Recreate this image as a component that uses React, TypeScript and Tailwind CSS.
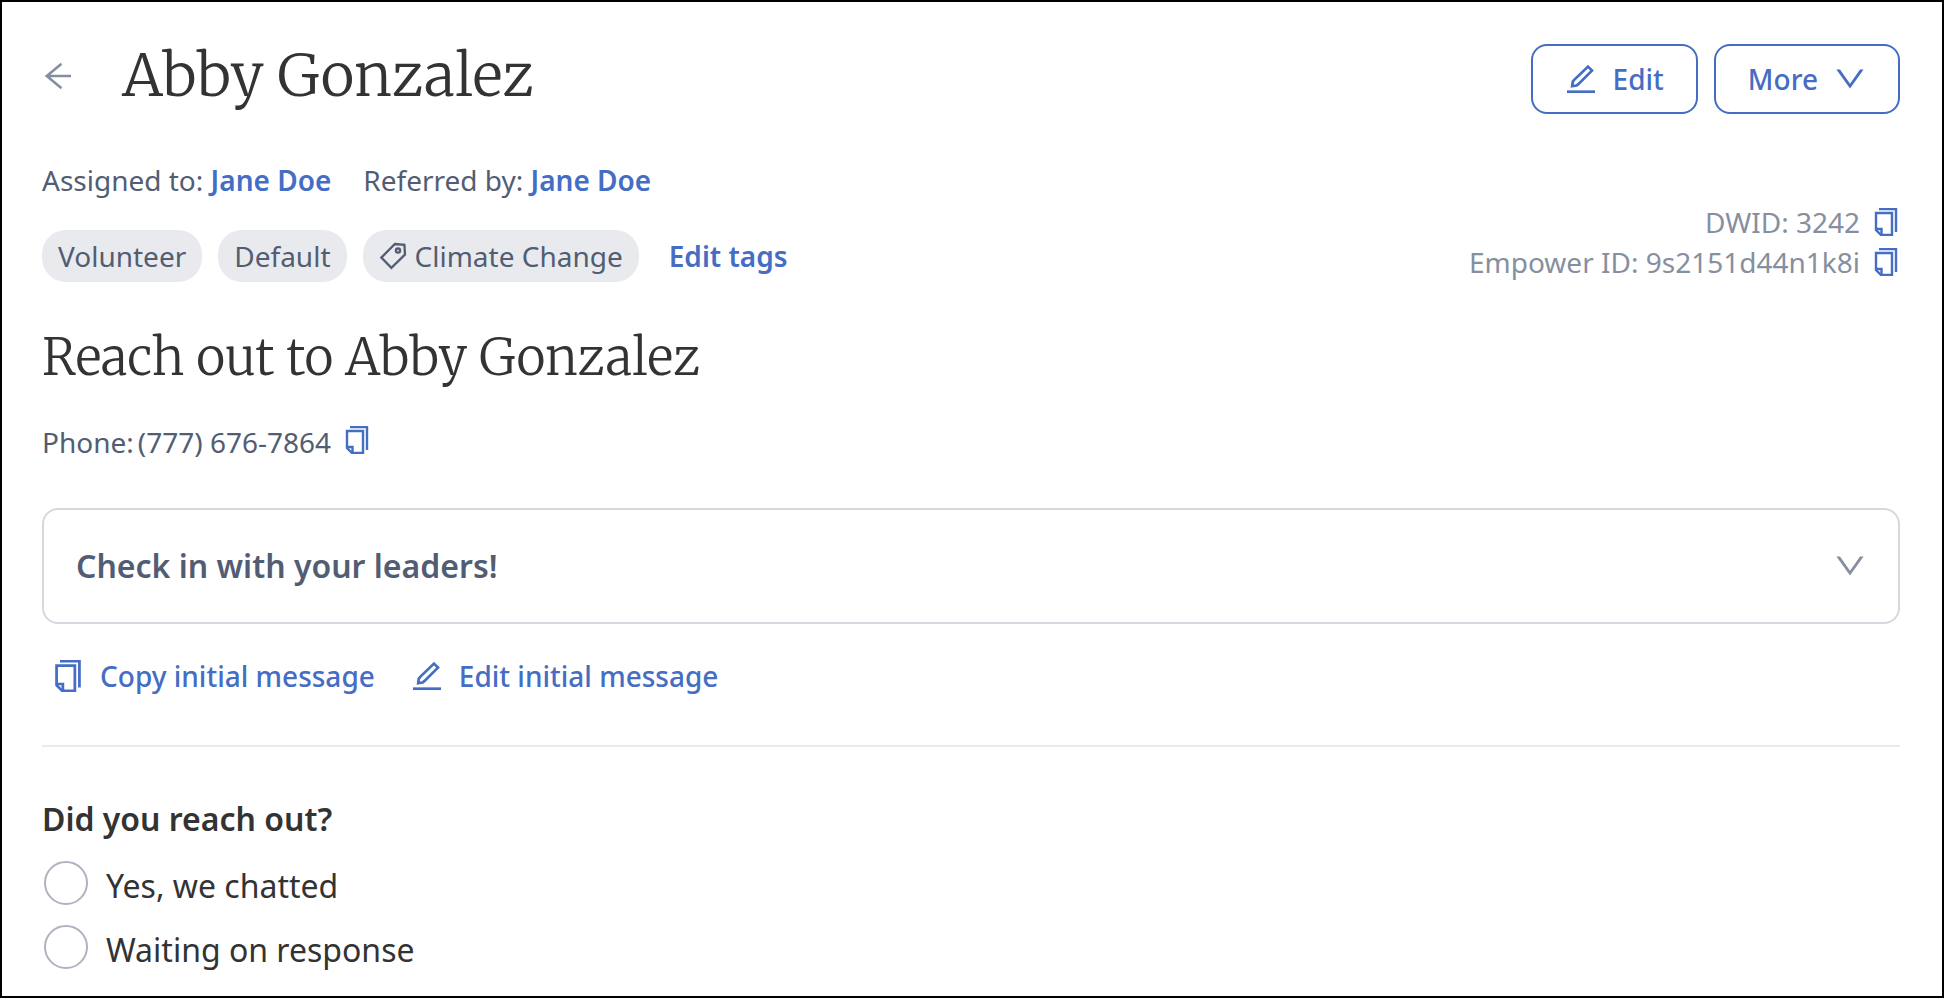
import React from "react";

type IconProps = { className?: string };

const EditIcon = ({ className }: IconProps) => (
  <svg viewBox="0 0 32 32" fill="none" stroke="currentColor" strokeWidth="2.7" className={className} aria-hidden="true">
    <path d="M23 3.6 27 7.6 13.3 21.2 11.5 22.5 7.2 23.2 7.8 18.6 9.2 16.8Z" />
    <path d="M2 28.7H30" />
  </svg>
);

const CopyIcon = ({ className }: IconProps) => (
  <svg viewBox="0 0 28 28" fill="none" stroke="currentColor" strokeWidth="2.4" className={className} aria-hidden="true">
    <path d="M4 5H20V27H9L4 22Z" />
    <path d="M4 21H9.5V27" />
    <path d="M7 1H24V24" />
  </svg>
);

const ChevronIcon = ({ className }: IconProps) => (
  <svg viewBox="0 0 32 32" fill="currentColor" className={className} aria-hidden="true">
    <path d="M2.4 6.6H6L16 20.8 26 6.6H29.6L16 25.6Z" />
  </svg>
);

const ArrowIcon = ({ className }: IconProps) => (
  <svg viewBox="0 0 32 32" fill="none" stroke="currentColor" strokeWidth="2.6" className={className} aria-hidden="true">
    <path d="M4 16H29M19.5 3.8 4.8 16 19.5 28.2" />
  </svg>
);

const TagIcon = ({ className }: IconProps) => (
  <svg viewBox="0 0 28 28" fill="none" stroke="currentColor" strokeWidth="2.3" className={className} aria-hidden="true">
    <path d="M2.3 15.6 15.9 2 25.4 2.9 26 12.5 12.4 25.8Z" />
    <circle cx="19" cy="8.6" r="2.1" />
  </svg>
);

const Chip = ({ children }: { children: React.ReactNode }) => (
  <li className="flex h-13 items-center gap-2 rounded-3xl bg-[#e9eaee] px-4">{children}</li>
);

const IdLine = ({ label, value }: { label: string; value: string }) => (
  <div className="flex items-center gap-3">
    <span>
      {label}: {value}
    </span>
    <button type="button" aria-label={`Copy ${label}`} className="text-[#456dc4]">
      <CopyIcon className="size-7" />
    </button>
  </div>
);

export default function App() {
  return (
    <main className="min-h-screen border-2 border-black bg-white pt-8 pr-[42px] pl-10 font-['Noto_Sans',sans-serif] text-[28px] leading-10 text-[#525d73]">
      <header className="flex items-start justify-between">
        <div className="flex items-center gap-12">
          <button type="button" aria-label="Back" className="text-[#868f9f]">
            <ArrowIcon className="size-8" />
          </button>
          <h1 className="font-['Merriweather','Liberation_Serif',serif] text-[58px] leading-[84px] font-light text-[#333]">Abby Gonzalez</h1>
        </div>
        <div className="mt-2.5 flex gap-4 font-medium text-[#456dc4]">
          <button type="button" className="flex h-[70px] items-center gap-4 rounded-2xl border-2 border-[#456dc4] px-8">
            <EditIcon className="size-8" />
            Edit
          </button>
          <button type="button" className="flex h-[70px] items-center gap-4 rounded-2xl border-2 border-[#456dc4] px-8">
            More
            <ChevronIcon className="size-8" />
          </button>
        </div>
      </header>

      <div className="mt-[42px] flex items-end justify-between">
        <div>
          <div className="flex gap-8">
            <p>
              Assigned to: <a href="#assigned" className="font-semibold text-[#456dc4]">Jane Doe</a>
            </p>
            <p>
              Referred by: <a href="#referred" className="font-semibold text-[#456dc4]">Jane Doe</a>
            </p>
          </div>
          <div className="mt-[30px] flex items-center gap-[30px]">
            <ul className="flex gap-4">
              <Chip>Volunteer</Chip>
              <Chip>Default</Chip>
              <Chip>
                <TagIcon className="size-7" />
                Climate Change
              </Chip>
            </ul>
            <button type="button" className="font-semibold text-[#456dc4]">Edit tags</button>
          </div>
        </div>
        <div className="flex flex-col items-end text-[#868f9f]">
          <IdLine label="DWID" value="3242" />
          <IdLine label="Empower ID" value="9s2151d44n1k8i" />
        </div>
      </div>

      <section>
        <h2 className="mt-10 font-['Merriweather','Liberation_Serif',serif] text-[50px] leading-[72px] font-light text-[#333]">Reach out to Abby Gonzalez</h2>
        <div className="mt-7 flex items-start gap-3">
          <p className="flex gap-1">
            <span>Phone:</span>
            <span>(777) 676-7864</span>
          </p>
          <button type="button" aria-label="Copy phone" className="flex h-9 items-center text-[#456dc4]">
            <CopyIcon className="size-7" />
          </button>
        </div>
        <button type="button" className="mt-[46px] flex h-29 w-full items-center justify-between rounded-2xl border-2 border-[#d5d8df] px-8 text-[32px] font-semibold">
          Check in with your leaders!
          <ChevronIcon className="size-8 text-[#868f9f]" />
        </button>
        <div className="mt-8 flex gap-9 px-2.5 font-medium text-[#456dc4]">
          <button type="button" className="flex items-center gap-4">
            <CopyIcon className="size-8" />
            Copy initial message
          </button>
          <button type="button" className="flex items-center gap-4">
            <EditIcon className="size-8" />
            Edit initial message
          </button>
        </div>
      </section>

      <hr className="mt-[49px] border-t-2 border-[#e9eaee]" />

      <fieldset className="mt-13 text-[32px] text-[#333]">
        <legend className="font-semibold">Did you reach out?</legend>
        <div className="mt-[22px] flex flex-col gap-3.5 px-0.5">
          {["Yes, we chatted", "Waiting on response"].map((option) => (
            <label key={option} className="flex items-start gap-[18px] leading-[50px]">
              <input type="radio" name="reach-out" value={option} className="size-11 appearance-none rounded-full border-2 border-[#adb3c0] checked:border-[#456dc4] checked:bg-[#456dc4]" />
              {option}
            </label>
          ))}
        </div>
      </fieldset>
    </main>
  );
}
